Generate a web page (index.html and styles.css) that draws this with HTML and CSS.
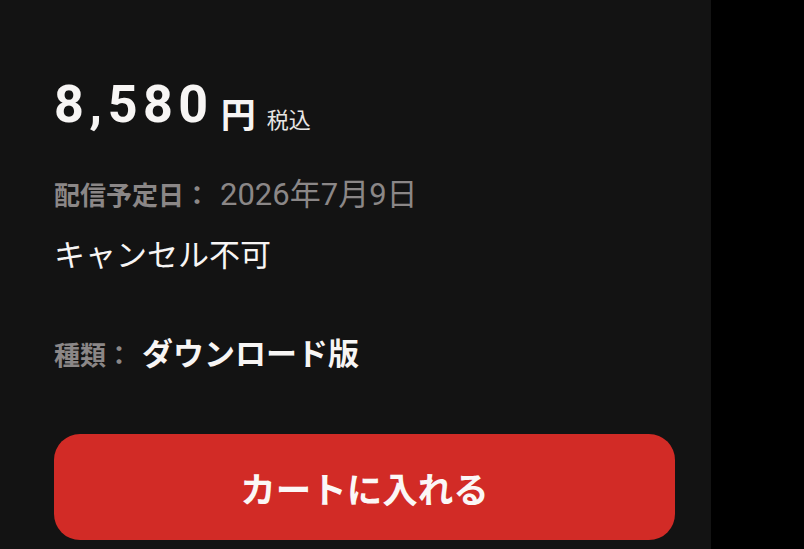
FILE: index.html
```html
<!DOCTYPE html>
<html lang="ja">
<head>
<meta charset="utf-8">
<link rel="stylesheet" href="styles.css">
</head>
<body>
<div class="page">
  <section class="panel">
    <div class="price">
      <span class="amount">8,580</span><span class="yen">円</span><span class="tax">税込</span>
    </div>
    <div class="row date-row">
      <span class="label">配信予定日：</span><span class="value date">2026年7月9日</span>
    </div>
    <div class="cancel">キャンセル不可</div>
    <div class="row type-row">
      <span class="label">種類：</span><span class="value type">ダウンロード版</span>
    </div>
    <button class="cart">カートに入れる</button>
  </section>
  <div class="side"></div>
</div>
</body>
</html>
```
FILE: styles.css
```css
html, body {
  margin: 0;
  padding: 0;
  background: #000;
}
body {
  font-family: Roboto, "Noto Sans CJK JP", sans-serif;
  color: #f7f5f4;
}
.page {
  display: flex;
  width: 804px;
  height: 549px;
  overflow: hidden;
}
.panel {
  width: 711px;
  flex: none;
  background: #131313;
  box-sizing: border-box;
  padding: 70px 36px 0 54px;
  display: flex;
  flex-direction: column;
}
.side {
  flex: 1;
  background: #000;
}
.price {
  height: 70px;
  line-height: 70px;
  white-space: nowrap;
}
.amount {
  font-weight: 700;
  font-size: 52px;
  letter-spacing: 5.5px;
  vertical-align: 6px;
}
.yen {
  font-weight: 700;
  font-size: 35px;
  margin-left: 7px;
}
.tax {
  font-size: 22px;
  margin-left: 11px;
  color: #e8e6e5;
}
.row {
  display: flex;
  align-items: baseline;
}
.date-row {
  margin-top: 29px;
  height: 40px;
}
.label {
  font-weight: 700;
  font-size: 26px;
  color: #8b8787;
}
.value {
  font-size: 31px;
}
.date {
  color: #8b8787;
  margin-left: 10px;
}
.cancel {
  margin-top: 27px;
  font-size: 31px;
  line-height: 40px;
}
.type-row {
  margin-top: 53px;
  height: 40px;
}
.type {
  font-weight: 700;
  font-size: 31px;
  color: #f7f5f4;
  margin-left: 10px;
}
.cart {
  margin-top: 65px;
  height: 106px;
  border: none;
  border-radius: 26px;
  background: #d22b26;
  color: #fbf7f6;
  font-family: Roboto, "Noto Sans CJK JP", sans-serif;
  font-weight: 700;
  font-size: 35.5px;
  padding: 0;
  width: 621px;
}
```
